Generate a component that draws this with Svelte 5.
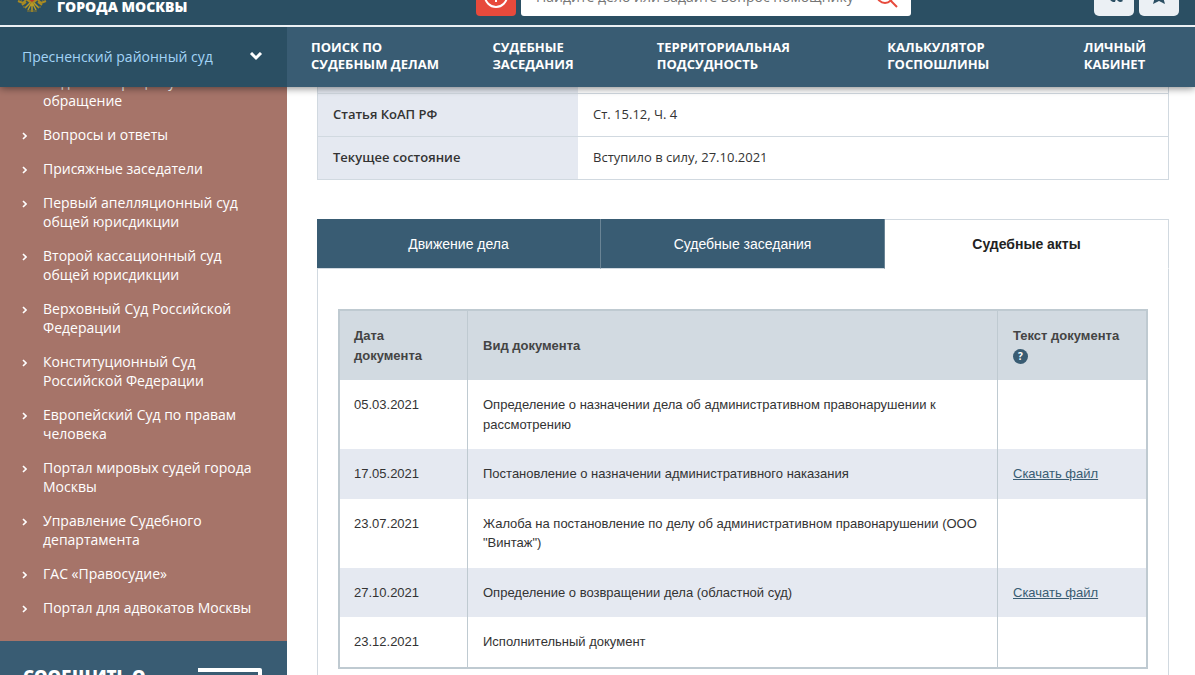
<script lang="ts">
  let query = $state('');
  let activeTab = $state(2);

  const menu = [
    ['Поиск по', 'судебным делам'],
    ['Судебные', 'заседания'],
    ['Территориальная', 'подсудность'],
    ['Калькулятор', 'госпошлины'],
    ['Личный', 'кабинет'],
  ];

  const links = [
    'Подать непроцессуальное обращение',
    'Вопросы и ответы',
    'Присяжные заседатели',
    'Первый апелляционный суд общей юрисдикции',
    'Второй кассационный суд общей юрисдикции',
    'Верховный Суд Российской Федерации',
    'Конституционный Суд Российской Федерации',
    'Европейский Суд по правам человека',
    'Портал мировых судей города Москвы',
    'Управление Судебного департамента',
    'ГАС «Правосудие»',
    'Портал для адвокатов Москвы',
  ];

  const tabs = ['Движение дела', 'Судебные заседания', 'Судебные акты'];

  const acts = [
    { date: '05.03.2021', kind: 'Определение о назначении дела об административном правонарушении к рассмотрению', file: false },
    { date: '17.05.2021', kind: 'Постановление о назначении административного наказания', file: true },
    { date: '23.07.2021', kind: 'Жалоба на постановление по делу об административном правонарушении (ООО "Винтаж")', file: false },
    { date: '27.10.2021', kind: 'Определение о возвращении дела (областной суд)', file: true },
    { date: '23.12.2021', kind: 'Исполнительный документ', file: false },
  ];
</script>

<div class="page">
  <header>
    <div class="topbar">
      <a class="logo" href="/">
        <svg class="emblem" width="30" height="30" viewBox="0 0 30 30" fill="none">
          <path d="M2 15l3 3M1 19l5 2 3-3M28 15l-3 3M29 19l-5 2-3-3M5 23l4-3M25 23l-4-3" stroke="#a98a22" stroke-width="2" />
          <path d="M9 4h12v14l-6 5-6-5z" fill="#a98a22" />
          <path d="M11 6h8v11l-4 3-4-3z" fill="#b5362c" />
          <path d="M8 26l5-5M22 26l-5-5M11 28l3-6M19 28l-3-6M15 21v9" stroke="#b99a25" stroke-width="1.5" />
          <path d="M6 25h3M21 25h3M10 29h10" stroke="#8d7a2a" />
        </svg>
        <span>города Москвы</span>
      </a>
      <form class="search" onsubmit={(e) => e.preventDefault()}>
        <button class="assistant" type="button" aria-label="Помощник">
          <svg width="24" height="24" viewBox="0 0 24 24" fill="none" stroke="#fff" stroke-width="2">
            <circle cx="12" cy="12" r="11" />
            <path d="M12 6v12" />
          </svg>
        </button>
        <div class="field">
          <input type="text" aria-label="Поиск" placeholder="Найдите дело или задайте вопрос помощнику" bind:value={query} />
          <button class="find" type="submit" aria-label="Найти">
            <svg width="22" height="22" viewBox="0 0 22 22" fill="none" stroke="#e74a3c" stroke-width="2">
              <circle cx="9" cy="9" r="8" />
              <path d="M14 14l7 7" />
            </svg>
          </button>
        </div>
      </form>
      <div class="tools">
        <button aria-label="ВКонтакте">
          <svg width="18" height="12" viewBox="0 0 18 12" fill="#2b4f63">
            <path d="M1 1h3l3 5V1h4v4l3-4h3l-3 5 4 5q-3 2-5 0l-2-2-1 3H8Q4 11 1 1z" />
          </svg>
        </button>
        <button aria-label="Избранное">
          <svg width="16" height="16" viewBox="0 0 16 16" fill="#2b4f63">
            <path d="M8 0l2 5h6l-4 4 2 7-6-3-6 3 2-7-4-4h6z" />
          </svg>
        </button>
      </div>
    </div>
    <div class="menubar">
      <button class="court">
        Пресненский районный суд
        <svg width="14" height="9" viewBox="0 0 14 9" fill="none" stroke="#fff" stroke-width="3">
          <path d="M2 1l5 5 5-5" />
        </svg>
      </button>
      <nav class="menu">
        {#each menu as [first, second]}
          <a href="/">{first}<br />{second}</a>
        {/each}
      </nav>
    </div>
  </header>

  <div class="body">
    <aside>
      <ul>
        {#each links as link}
          <li>
            <svg width="5" height="8" viewBox="0 0 5 8" fill="none" stroke="#fff" stroke-width="1.6">
              <path d="M1 1l3 3-3 3" />
            </svg>
            <a href="/">{link}</a>
          </li>
        {/each}
      </ul>
      <div class="report">
        <strong>Сообщить о</strong>
        <svg width="64" height="48" viewBox="0 0 64 48" fill="none" stroke="#fff" stroke-width="4" stroke-linejoin="round">
          <path d="M0 2h62v44H2V12" />
        </svg>
      </div>
    </aside>

    <main>
      <table class="details">
        <tbody>
          <tr><th></th><td></td></tr>
          <tr><th scope="row">Статья КоАП РФ</th><td>Ст. 15.12, Ч. 4</td></tr>
          <tr><th scope="row">Текущее состояние</th><td>Вступило в силу, 27.10.2021</td></tr>
        </tbody>
      </table>

      <div class="tabs" role="tablist">
        {#each tabs as tab, i}
          <button role="tab" aria-selected={activeTab === i} class:active={activeTab === i} onclick={() => (activeTab = i)}>{tab}</button>
        {/each}
      </div>
      <div class="panel">
        <table class="acts">
          <thead>
            <tr>
              <th class="date">Дата документа</th>
              <th>Вид документа</th>
              <th class="file">Текст документа <button class="help" aria-label="Справка">?</button></th>
            </tr>
          </thead>
          <tbody>
            {#each acts as act}
              <tr>
                <td class="date">{act.date}</td>
                <td>{act.kind}</td>
                <td>{#if act.file}<a href="/">Скачать файл</a>{/if}</td>
              </tr>
            {/each}
          </tbody>
        </table>
      </div>
    </main>
  </div>
</div>

<style>
  :global(body) {
    margin: 0;
    overflow: hidden;
  }
  .page {
    display: flex;
    flex-direction: column;
    height: 100vh;
    overflow: hidden;
    font-family: 'Open Sans', sans-serif;
    color: #333;
  }
  button {
    border: 0;
    padding: 0;
    font: inherit;
    cursor: pointer;
  }
  header {
    position: relative;
    z-index: 1;
    flex: none;
    color: #fff;
    box-shadow: 0 1px 8px rgba(0, 0, 0, 0.5);
  }
  .topbar {
    display: flex;
    align-items: flex-end;
    height: 25px;
    overflow: hidden;
    box-sizing: border-box;
    padding: 0 16px 9px 17px;
    background: #2b4f63;
  }
  .logo {
    display: flex;
    align-items: flex-end;
    gap: 10px;
    width: 459px;
    color: #fff;
    font: 800 14px/18px 'Open Sans', sans-serif;
    text-transform: uppercase;
    text-decoration: none;
  }
  .emblem {
    margin-bottom: 4px;
  }
  .search {
    display: flex;
    flex: none;
    gap: 5px;
    width: 435px;
  }
  .assistant {
    display: flex;
    justify-content: center;
    align-items: center;
    width: 40px;
    height: 40px;
    border-radius: 4px;
    background: #e74a3c;
  }
  .field {
    display: flex;
    flex: 1;
    align-items: center;
    padding: 2px 13px 0 15px;
    border-radius: 3px;
    background: #fff;
  }
  .field input {
    flex: 1;
    min-width: 0;
    padding: 0;
    border: 0;
    outline: 0;
    font: 14px/20px 'Open Sans', sans-serif;
  }
  .field input::placeholder {
    color: #757575;
  }
  .find {
    display: flex;
    background: none;
  }
  .tools {
    display: flex;
    gap: 5px;
    margin-left: auto;
  }
  .tools button {
    display: flex;
    justify-content: center;
    align-items: center;
    width: 40px;
    height: 40px;
    border-radius: 5px;
    background: #ebf0f4;
  }
  .menubar {
    display: flex;
    height: 60px;
    border-top: 2px solid #ebf0f4;
    background: #395c73;
  }
  .court {
    display: flex;
    flex: none;
    align-items: center;
    justify-content: space-between;
    width: 287px;
    padding: 0 24px 2px 22px;
    background: #2b4f63;
    color: #a3d4f7;
    font-size: 14px;
  }
  .menu {
    display: grid;
    flex: 1;
    grid-template-columns: 181fr 164fr 230fr 196fr auto;
    align-items: center;
    padding: 0 49px 2px 24px;
  }
  .menu a {
    color: #fff;
    font-size: 13px;
    font-weight: 700;
    line-height: 17px;
    text-transform: uppercase;
    text-decoration: none;
  }
  .body {
    display: flex;
    flex: 1;
    min-height: 0;
  }
  aside {
    flex: none;
    width: 287px;
    background: #395c73;
  }
  ul {
    display: flex;
    flex-direction: column;
    gap: 15px;
    margin: -15px 0 0;
    padding: 0 30px 24px 22px;
    list-style: none;
    background: #a67469;
  }
  li {
    display: flex;
    gap: 16px;
    font-size: 14px;
    line-height: 19px;
  }
  li svg {
    flex: none;
    margin-top: 7px;
  }
  li a {
    color: #fff;
    text-decoration: none;
  }
  .report {
    display: flex;
    justify-content: space-between;
    align-items: flex-start;
    padding: 27px 25px 0 23px;
    color: #fff;
  }
  .report strong {
    font-size: 17px;
    line-height: 17px;
    font-weight: 800;
    text-transform: uppercase;
  }
  main {
    flex: 1;
    min-width: 0;
    padding: 0 26px 0 30px;
  }
  .details {
    width: 100%;
    margin: -19px 0 39px;
    border-collapse: collapse;
    font-size: 13px;
    line-height: 18px;
  }
  .details th,
  .details td {
    padding: 11px 15px 13px;
    border: 1px solid #d1d9e0;
    text-align: left;
  }
  .details th {
    width: 230px;
    border-right: 0;
    background: #e5e9f1;
    font-weight: 600;
  }
  .details td {
    border-left: 0;
  }
  .tabs {
    display: grid;
    grid-template-columns: repeat(3, 1fr);
    font-family: 'Liberation Sans', sans-serif;
  }
  .tabs button {
    height: 50px;
    border-right: 1px solid #6a8495;
    border-bottom: 1px solid #d1d9e0;
    background: #395c73;
    color: #fff;
    font-size: 14px;
  }
  .tabs button.active {
    border: 1px solid #d1d9e0;
    border-bottom-color: #fff;
    border-left: 0;
    background: #fff;
    color: #222;
    font-weight: 700;
  }
  .panel {
    padding: 40px 20px 60px;
    border: 1px solid #d1d9e0;
    border-top: 0;
  }
  .acts {
    width: 100%;
    border: 2px solid #bfcad1;
    border-collapse: collapse;
    font-family: 'Liberation Sans', sans-serif;
    font-size: 13px;
    line-height: 1.5;
  }
  .acts th,
  .acts td {
    padding: 15px;
    border-right: 1px solid #bfcad1;
    text-align: left;
  }
  .acts th {
    background: #d2dae1;
    color: #444;
  }
  .acts td {
    vertical-align: top;
  }
  .acts tbody tr:nth-child(even) {
    background: #e5e9f1;
  }
  .acts .date {
    width: 98px;
    padding-left: 14px;
  }
  .acts .file {
    width: 118px;
  }
  .acts a {
    color: #395c73;
  }
  .help {
    display: inline-block;
    width: 15px;
    height: 15px;
    border-radius: 50%;
    background: #395c73;
    color: #fff;
    font: 700 10px/15px 'Open Sans', sans-serif;
    vertical-align: middle;
  }
</style>
